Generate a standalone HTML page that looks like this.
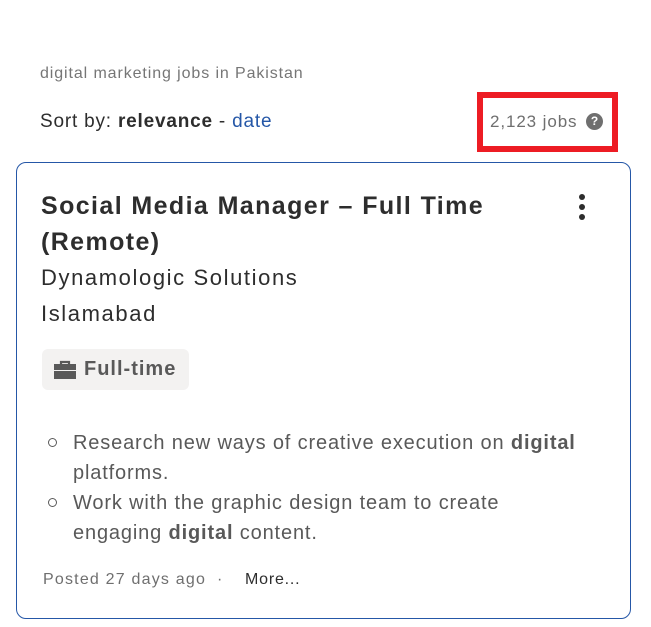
<!DOCTYPE html>
<html><head><meta charset="utf-8"><style>
*{margin:0;padding:0;box-sizing:border-box}
body{width:651px;height:627px;background:#fff;font-family:"Liberation Sans","DejaVu Sans",sans-serif;position:relative;overflow:hidden;color:#2d2d2d}
.a{position:absolute;white-space:nowrap}
</style></head><body>
<div class="a" style="left:40px;top:65px;font-size:16px;letter-spacing:0.9px;color:#767676">digital marketing jobs in Pakistan</div>
<div class="a" style="left:40px;top:111px;font-size:19px;letter-spacing:0.8px;color:#2d2d2d">Sort by: <b>relevance</b> - <span style="color:#2557a7">date</span></div>
<div class="a" style="left:477px;top:92px;width:141px;height:60px;border:6px solid #ed1c24"></div>
<div class="a" style="left:490px;top:112px;font-size:17px;letter-spacing:0.9px;color:#6f6f6f">2,123 jobs</div>
<div class="a" style="left:586px;top:113px;width:17px;height:17px;border-radius:50%;background:#6f6f6f;color:#fff;font-size:12px;font-weight:bold;text-align:center;line-height:17px">?</div>
<div class="a" style="left:16px;top:162px;width:615px;height:457px;border:1px solid #2557a7;border-radius:10px"></div>
<div class="a" style="left:41px;top:188px;font-size:25px;font-weight:bold;letter-spacing:1.4px;line-height:36px;color:#2d2d2d">Social Media Manager – Full Time<br>(Remote)</div>
<div class="a" style="left:579px;top:194px;width:6px">
<div style="width:6px;height:6px;border-radius:50%;background:#2d2d2d;margin-bottom:4px"></div>
<div style="width:6px;height:6px;border-radius:50%;background:#2d2d2d;margin-bottom:4px"></div>
<div style="width:6px;height:6px;border-radius:50%;background:#2d2d2d"></div></div>
<div class="a" style="left:41px;top:260px;font-size:22px;letter-spacing:1.6px;line-height:36px;color:#2d2d2d">Dynamologic Solutions<br>Islamabad</div>
<div class="a" style="left:42px;top:349px;width:147px;height:41px;background:#f3f2f1;border-radius:6px"></div>
<svg class="a" style="left:54px;top:360px" width="22" height="19" viewBox="0 0 22 19"><path d="M7 4V2h8v2" fill="none" stroke="#595959" stroke-width="2.2"/><rect x="0" y="4" width="22" height="6" fill="#595959"/><rect x="0" y="11" width="22" height="8" fill="#595959"/></svg>
<div class="a" style="left:84px;top:358px;font-size:20px;font-weight:bold;letter-spacing:1px;color:#595959">Full-time</div>
<div class="a" style="left:73px;top:428px;font-size:20px;letter-spacing:0.85px;line-height:30px;color:#595959">Research new ways of creative execution on <b>digital</b><br>platforms.<br>Work with the graphic design team to create<br>engaging <b>digital</b> content.</div>
<div class="a" style="left:48px;top:438px;width:9px;height:9px;border:1.5px solid #595959;border-radius:50%"></div>
<div class="a" style="left:48px;top:498px;width:9px;height:9px;border:1.5px solid #595959;border-radius:50%"></div>
<div class="a" style="left:43px;top:571px;font-size:16px;letter-spacing:1.2px;color:#6f6f6f">Posted 27 days ago</div>
<div class="a" style="left:217px;top:571px;font-size:16px;color:#6f6f6f">·</div>
<div class="a" style="left:245px;top:571px;font-size:16px;letter-spacing:0.8px;color:#2d2d2d">More...</div>
</body></html>
